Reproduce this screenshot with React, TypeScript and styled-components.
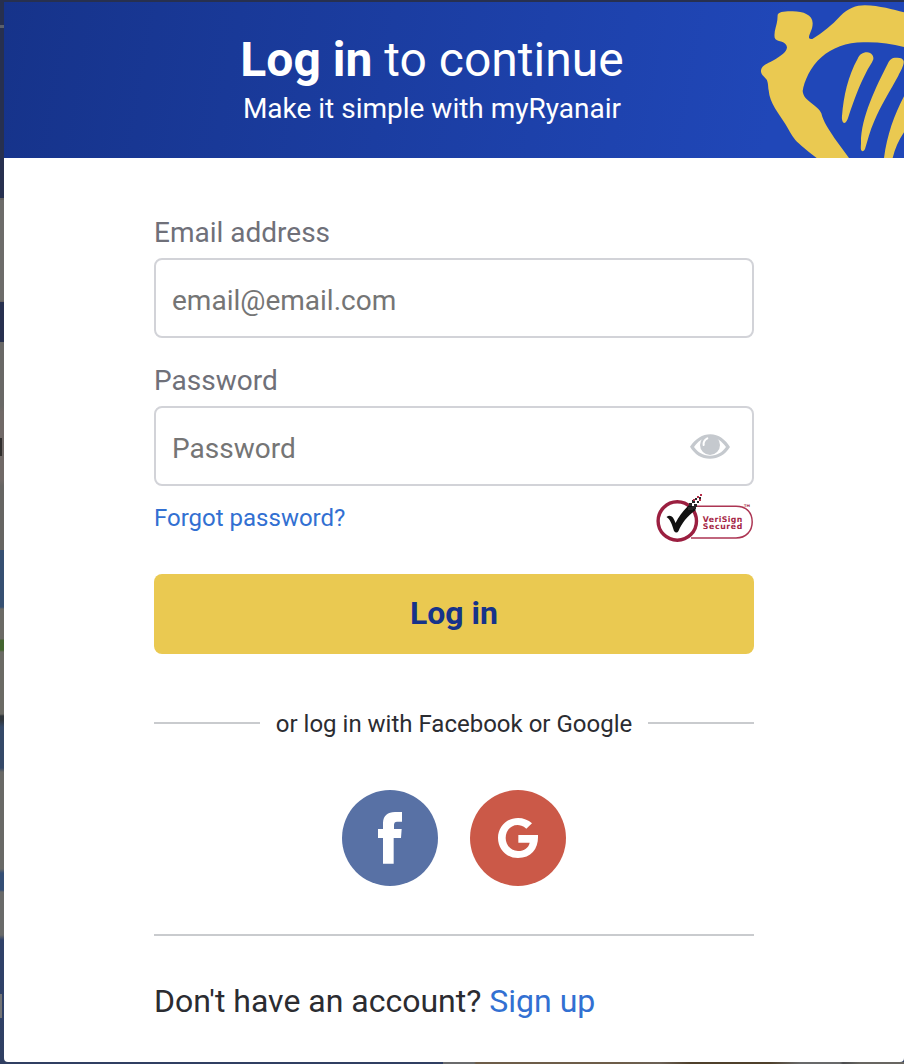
import React from "react";
import styled, { createGlobalStyle } from "styled-components";

const GlobalStyle = createGlobalStyle`
  *, *::before, *::after { box-sizing: border-box; }
  body { margin: 0; overflow: hidden; font-family: Roboto, "Liberation Sans", sans-serif; }
`;

const Backdrop = styled.div`
  height: 1064px;
  padding: 2px 0 2px 4px;
  background:
    linear-gradient(#302e2d, #302e2d) 0 438px / 2px 18px no-repeat,
    linear-gradient(#737476, #737476) 0 994px / 2px 24px no-repeat,
    linear-gradient(90deg, #303f62 0 443px, #6a6b6c 443px 474px, #6d5d49 476px 620px, #6b6156 660px, #4f402b 690px 770px, #68696a 800px 840px, #4b4c4e 843px, #686661 860px) 0 1062px / 100% 2px no-repeat,
    linear-gradient(#27304f 0 25px, #5b606b 25px 28px, #27304f 28px 198px, #62605e 198px 200px, #6d6c6a 200px 300px, #625f5d 302px, #27304f 302px 342px, #696866 342px 406px, #706967 412px 480px, #666563 486px 550px, #365072 550px 607px, #6b6a65 609px 639px, #43652f 640px 650px, #6b6a64 652px 714px, #30363b 716px 720px, #354968 727px 768px, #696966 772px 869px, #344e75 873px 890px, #696a69 892px 935px, #2f4168 940px 980px, #303f62 100%);
`;

const Dialog = styled.main`
  height: 1060px;
  background: #fff;
  border-radius: 0 0 4px 4px;
  overflow: hidden;
`;

const Header = styled.header`
  display: grid;
  grid-template-columns: 736px 164px;
  height: 156px;
  background: linear-gradient(100deg, #16338a, #2047b8 85%);
  color: #fff;
`;

const HeaderText = styled.div`
  padding: 29px 0 0 120px;
  text-align: center;
`;

const Title = styled.h1`
  margin: 0;
  font-size: 48px;
  font-weight: 400;
  line-height: 58px;
  white-space: nowrap;
`;

const Subtitle = styled.p`
  margin: 0;
  font-size: 28px;
  line-height: 40px;
  white-space: nowrap;
`;

const Form = styled.form`
  width: 600px;
  margin-left: 150px;
  padding-top: 55px;
`;

const Field = styled.div`
  margin-bottom: 23px;
`;

const Label = styled.label`
  display: block;
  margin-bottom: 5px;
  color: #6f7079;
  font-size: 28px;
  line-height: 40px;
`;

const InputFrame = styled.div`
  display: flex;
  align-items: center;
  height: 80px;
  padding: 4px 22px 0 16px;
  border: 2px solid #d2d3d8;
  border-radius: 8px;
`;

const Input = styled.input`
  flex: 1;
  min-width: 0;
  padding: 0;
  border: 0;
  outline: 0;
  background: transparent;
  font: 400 28px Roboto, sans-serif;
  &::placeholder { color: #757575; opacity: 1; }
`;

const IconButton = styled.button`
  display: flex;
  padding: 0;
  margin-bottom: 2px;
  border: 0;
  background: none;
`;

const HelpRow = styled.div`
  display: flex;
  justify-content: space-between;
  height: 50px;
  margin-top: -15px;
  line-height: 48px;
  font-size: 24px;
`;

const Link = styled.a`
  color: #3270d2;
  text-decoration: none;
`;

const Submit = styled.button`
  width: 100%;
  height: 80px;
  margin-top: 30px;
  padding: 0 0 2px;
  border: 0;
  border-radius: 8px;
  background: #eac951;
  color: #16338a;
  font: 700 32px Roboto, sans-serif;
`;

const Divider = styled.div`
  display: flex;
  align-items: center;
  gap: 16px;
  height: 32px;
  margin-top: 53px;
  color: #2b2c31;
  font-size: 24px;
  white-space: nowrap;
  &::before, &::after { content: ""; flex: 1; height: 2px; background: #c9cbce; }
`;

const DividerText = styled.span`
  padding-top: 2px;
`;

const SocialRow = styled.div`
  display: flex;
  justify-content: center;
  gap: 32px;
  margin-top: 51px;
`;

const SocialButton = styled.button<{ $color: string }>`
  width: 96px;
  height: 96px;
  padding: 0;
  border: 0;
  border-radius: 50%;
  background: ${({ $color }) => $color};
  svg { display: block; }
`;

const SignUp = styled.p`
  margin: 48px 0 0;
  padding-top: 45px;
  border-top: 2px solid #c9cbce;
  color: #2b2c31;
  font-size: 32px;
  line-height: 40px;
`;

const Harp = () => (
  <svg width="164" height="156" viewBox="0 6 492 468" fill="#eac951" aria-hidden="true">
    <path d="M113 44C118 34 139 34 158 34C190 34 218 45 218 70C218 91 207 101 207 113Q208 118 217 117C249 98 275 76 301 48C324 25 348 16 374 16C420 17 458 29 492 37V141C454 132 417 126 374 127C322 126 276 144 245 171C211 200 192 245 188 273C190 304 234 314 244 340C250 366 267 389 283 414L327 474H230C204 454 177 432 166 420C153 404 146 388 136 372C116 341 89 309 86 271C84 261 85 246 79 238C72 230 62 222 63 212C64 195 83 191 102 180C119 170 140 158 141 142C139 120 108 127 104 113C101 94 110 78 112 60Z" />
    <path d="M353 176C358 164 368 157 381 157C395 158 402 169 400 178C396 191 384 204 378 218C358 256 341 304 327 345Q320 369 313 369C307 368 305 358 306 348C311 287 324 228 353 176Z" />
    <path d="M444 190C449 179 455 173 469 173Q488 172 491 183C493 196 481 214 475 227C451 272 422 316 402 365C390 392 383 421 375 447Q372 455 366 453C362 451 362 443 363 431C361 358 407 262 444 190Z" />
    <path d="M492 289C463 344 441 405 432 474H458C465 446 476 421 492 397Z" />
  </svg>
);

const Eye = () => (
  <svg width="40" height="26" viewBox="0 0 120 78" aria-hidden="true">
    <path fill="#c5c9ce" fillRule="evenodd" d="M0 38C17 14 37 1 61 1C86 1 106 17 120 39C105 63 85 74 60 74C34 74 14 61 0 38ZM12 39C25 56 38 64 60 65C83 64 95 56 108 39C94 20 82 11 60 11C37 12 24 21 12 39Z" />
    <circle cx="60" cy="33" r="30" fill="#c5c9ce" />
    <path d="M41 33Q39 20 52 13" fill="none" stroke="#fff" strokeWidth="6" strokeLinecap="round" />
  </svg>
);

const SecureBadge = () => (
  <svg width="98" height="50" viewBox="0 0 98 50" aria-label="VeriSign Secured">
    <path d="M39 12.3H80C91 12.3 96.2 19 96.2 28S90 44 80 44H35" fill="#fff" stroke="#ac3553" strokeWidth="1.5" />
    <circle cx="21.3" cy="27" r="19.2" fill="#fff" stroke="#9b1f40" strokeWidth="3.4" />
    <path d="M10.5 23C14 20 17.5 22 19.5 29C24 20 30 14 34 10L40 16C31 22 26 29 22.5 37Q20.5 40 18 37C16 30 14 25 10.5 23Z" fill="#111" />
    <path fill="#292729" d="M33 9h3v3h-3zM36 6h3v3h-3zM38 10h3v3h-3zM39 4h2v2h-2zM41 7h2v2h-2zM36 12h4v3h-4zM43 3h2v2h-2zM32 13h5v3h-5z" />
    <path fill="#b72e4a" d="M41 2h2v2h-2zM44 0h2v2h-2zM43 5h2v2h-2zM37 5h2v2h-2z" />
    <g fill="#a52545" fontFamily="DejaVu Sans, sans-serif" fontWeight="700" fontSize="8">
      <text x="46.8" y="27.7" textLength="39.5" lengthAdjust="spacing" fontSize="7.8">VeriSign</text>
      <text x="46.8" y="34.8" textLength="39.5" lengthAdjust="spacing" fontSize="7.8">Secured</text>
      <text x="88" y="13" fontSize="3.5">TM</text>
    </g>
  </svg>
);

const FacebookIcon = () => (
  <svg width="96" height="96" viewBox="0 0 288 288" aria-hidden="true">
    <path fill="#fff" d="M123 221V144H108V117H123V98C124 77 137 66 159 66H180V95H165Q156 95 156 105V117H179L177 144H155V221Z" />
  </svg>
);

const GoogleIcon = () => (
  <svg width="96" height="96" viewBox="0 0 288 288" aria-hidden="true">
    <path fill="#fff" d="M186 100L169 116C159 107 149 105 143 105C121 105 107 123 107 144S123 183 144 183C163 183 176 173 179 158H145V135H204C206 175 185 204 144 204C110 204 84 178 84 144S110 84 144 84C160 84 175 90 186 100Z" />
  </svg>
);

export default function App() {
  return (
    <>
      <GlobalStyle />
      <Backdrop>
        <Dialog>
          <Header>
            <HeaderText>
              <Title><b>Log in</b> to continue</Title>
              <Subtitle>Make it simple with myRyanair</Subtitle>
            </HeaderText>
            <Harp />
          </Header>
          <Form onSubmit={(event) => event.preventDefault()}>
            <Field>
              <Label htmlFor="email">Email address</Label>
              <InputFrame><Input id="email" type="email" placeholder="email@email.com" /></InputFrame>
            </Field>
            <Field>
              <Label htmlFor="password">Password</Label>
              <InputFrame>
                <Input id="password" type="password" placeholder="Password" />
                <IconButton type="button" aria-label="Show password"><Eye /></IconButton>
              </InputFrame>
            </Field>
            <HelpRow>
              <Link href="#">Forgot password?</Link>
              <SecureBadge />
            </HelpRow>
            <Submit type="submit">Log in</Submit>
            <Divider><DividerText>or log in with Facebook or Google</DividerText></Divider>
            <SocialRow>
              <SocialButton type="button" $color="#5871a5" aria-label="Facebook"><FacebookIcon /></SocialButton>
              <SocialButton type="button" $color="#cb5948" aria-label="Google"><GoogleIcon /></SocialButton>
            </SocialRow>
            <SignUp>Don't have an account? <Link href="#">Sign up</Link></SignUp>
          </Form>
        </Dialog>
      </Backdrop>
    </>
  );
}
